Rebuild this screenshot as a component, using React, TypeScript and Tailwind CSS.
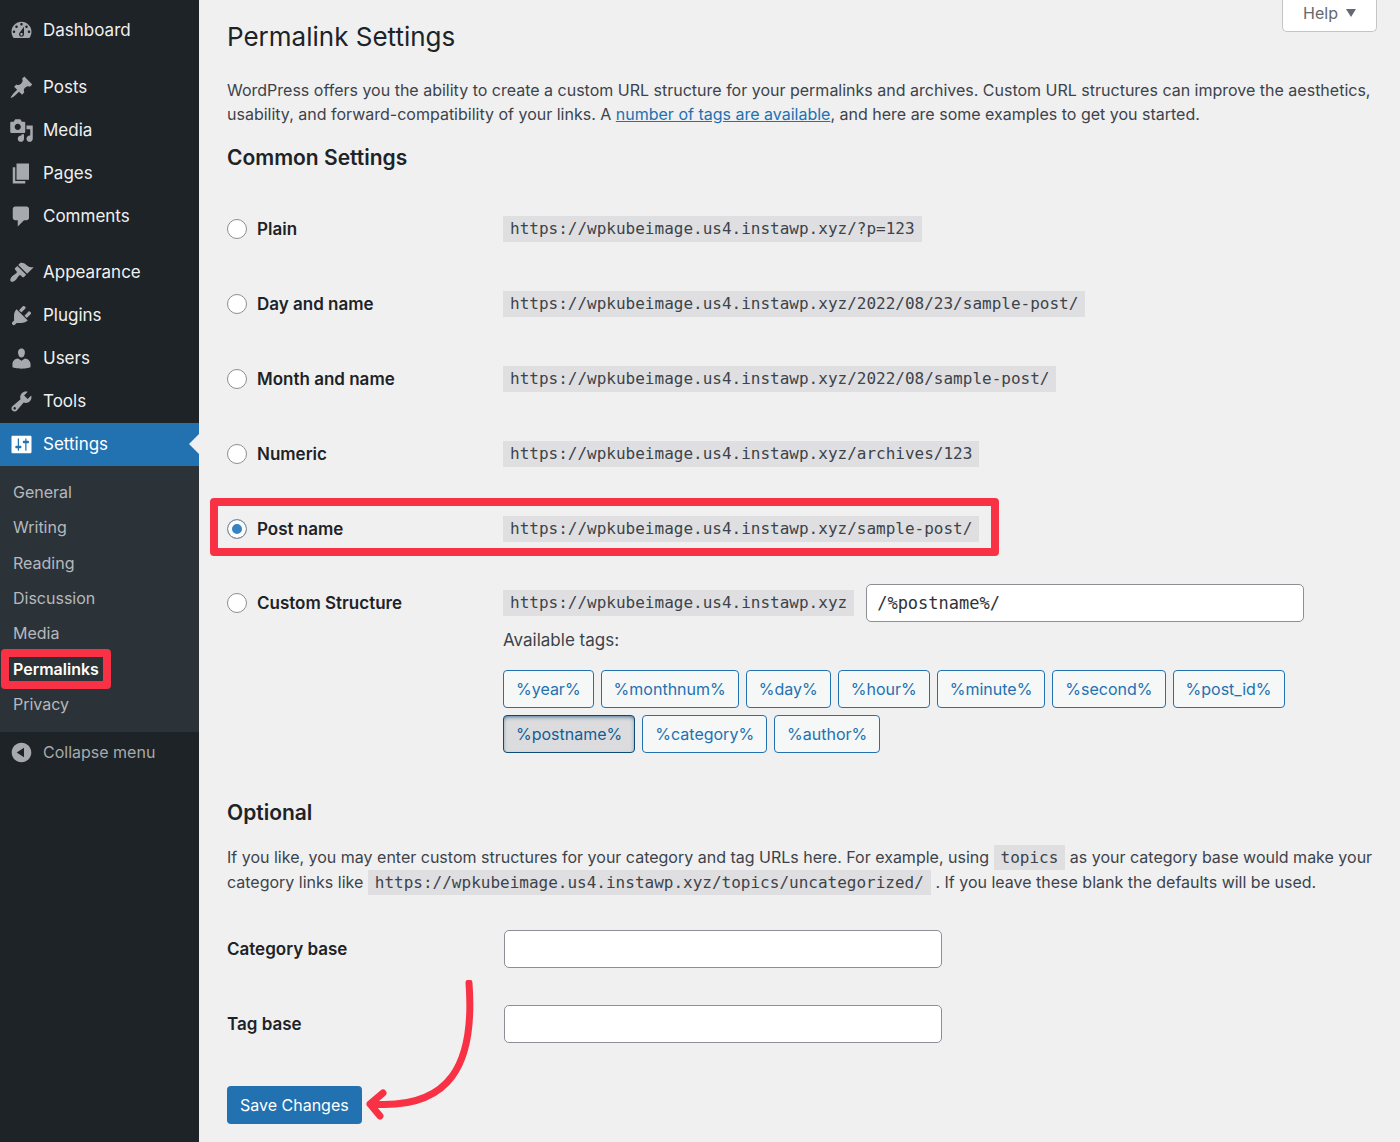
import React, { useState } from 'react';

const SITE = 'https://wpkubeimage.us4.instawp.xyz';

// 20x20 menu glyphs
const ICONS: Record<string, string> = {
  dashboard:
    'M3.76 16h12.48c1.1-1.37 1.76-3.11 1.76-5 0-4.42-3.58-8-8-8s-8 3.58-8 8c0 1.89.66 3.63 1.76 5zM10 4c.55 0 1 .45 1 1s-.45 1-1 1-1-.45-1-1 .45-1 1-1zM6 6c.55 0 1 .45 1 1s-.45 1-1 1-1-.45-1-1 .45-1 1-1zm8 0c.55 0 1 .45 1 1s-.45 1-1 1-1-.45-1-1 .45-1 1-1zm-5.37 5.55L12 7v6c0 1.1-.9 2-2 2s-2-.9-2-2c0-.57.24-1.08.63-1.45zM4 10c.55 0 1 .45 1 1s-.45 1-1 1-1-.45-1-1 .45-1 1-1zm12 0c.55 0 1 .45 1 1s-.45 1-1 1-1-.45-1-1 .45-1 1-1zm-5 3c0-.55-.45-1-1-1s-1 .45-1 1 .45 1 1 1 1-.45 1-1z',
  posts:
    'M10.44 3.02l1.82-1.82 6.36 6.35-1.83 1.82c-1.05-.68-2.48-.57-3.41.36l-.75.75c-.92.93-1.04 2.35-.35 3.41l-1.83 1.82-2.41-2.41-2.8 2.79c-.42.42-3.38 2.71-3.8 2.29s1.86-3.39 2.28-3.81l2.79-2.79L4.1 9.36l1.83-1.82c1.05.69 2.48.57 3.4-.36l.75-.75c.93-.92 1.05-2.35.36-3.41z',
  media:
    'M13 11V4c0-.55-.45-1-1-1h-1.67L9 1H5L3.67 3H2c-.55 0-1 .45-1 1v7c0 .55.45 1 1 1h10c.55 0 1-.45 1-1zM7 4.5c1.38 0 2.5 1.12 2.5 2.5S8.38 9.5 7 9.5 4.5 8.38 4.5 7 5.62 4.5 7 4.5zM14 6h5v10.5c0 1.38-1.12 2.5-2.5 2.5S14 17.88 14 16.5s1.12-2.5 2.5-2.5c.17 0 .34.02.5.05V9h-3V6zm-4 8.05V13h2v3.5c0 1.38-1.12 2.5-2.5 2.5S7 17.88 7 16.5 8.12 14 9.5 14c.17 0 .34.02.5.05z',
  pages: 'M6 15V2h10v13H6zm-1 1h8v2H3V5h2v11z',
  comments: 'M5 2h9c1.1 0 2 .9 2 2v7c0 1.1-.9 2-2 2h-2l-5 5v-5H5c-1.1 0-2-.9-2-2V4c0-1.1.9-2 2-2z',
  appearance:
    'M14.48 11.06L7.41 3.99l1.5-1.5c.5-.56 2.3-.47 3.51.32 1.21.8 1.43 1.28 2.91 2.1 1.18.64 2.45 1.26 4.45.85zm-.71.71L6.7 4.7 4.93 6.47c-.39.39-.39 1.02 0 1.41l1.06 1.06c.39.39.39 1.03 0 1.42-.6.6-1.43 1.11-2.21 1.69-.35.26-.7.53-1.01.84C1.43 14.23.4 16.08 1.4 17.07c.99 1 2.84-.03 4.18-1.36.31-.31.58-.66.85-1.02.57-.78 1.08-1.61 1.69-2.21.39-.39 1.02-.39 1.41 0l1.06 1.06c.39.39 1.02.39 1.41 0z',
  plugins:
    'M13.11 4.36L9.87 7.6 8 5.73l3.24-3.24c.35-.34 1.05-.2 1.56.32.52.51.66 1.21.31 1.55zm-8 1.77l.91-1.12 9.01 9.01-1.19.84c-.71.71-2.63 1.16-3.82 1.16H6.14L4.9 17.26c-.59.59-1.54.59-2.12 0-.59-.58-.59-1.53 0-2.12l1.24-1.24v-3.88c0-1.13.4-3.19 1.09-3.89zm7.26 3.97l3.24-3.24c.34-.35 1.04-.21 1.55.31.52.51.66 1.21.31 1.55l-3.24 3.25z',
  users:
    'M10 9.25c-2.27 0-2.73-3.44-2.73-3.44C7 4.02 7.82 2 9.97 2c2.16 0 2.98 2.02 2.71 3.81 0 0-.41 3.44-2.68 3.44zm0 2.57L12.72 10c2.39 0 4.52 2.33 4.52 4.53v2.49s-3.65 1.13-7.24 1.13c-3.65 0-7.24-1.13-7.24-1.13v-2.49c0-2.25 1.94-4.48 4.47-4.48z',
  tools:
    'M16.68 9.77c-1.34 1.34-3.3 1.67-4.95.99l-5.41 6.52c-.99.99-2.59.99-3.58 0s-.99-2.59 0-3.57l6.52-5.42c-.68-1.65-.35-3.61.99-4.95 1.28-1.28 3.12-1.62 4.72-1.06l-2.89 2.89 2.82 2.82 2.86-2.87c.53 1.58.18 3.39-1.08 4.65zM3.81 16.21c.4.39 1.04.39 1.43 0 .4-.4.4-1.04 0-1.43-.39-.4-1.03-.4-1.43 0-.39.39-.39 1.03 0 1.43z',
  settings:
    'M18 16V4c0-.55-.45-1-1-1H3c-.55 0-1 .45-1 1v12c0 .55.45 1 1 1h14c.55 0 1-.45 1-1zM8 11h1c.55 0 1 .45 1 1s-.45 1-1 1H8v1.5c0 .28-.22.5-.5.5s-.5-.22-.5-.5V13H6c-.55 0-1-.45-1-1s.45-1 1-1h1V5.5c0-.28.22-.5.5-.5s.5.22.5.5V11zm5-2h-1c-.55 0-1-.45-1-1s.45-1 1-1h1V5.5c0-.28.22-.5.5-.5s.5.22.5.5V7h1c.55 0 1 .45 1 1s-.45 1-1 1h-1v5.5c0 .28-.22.5-.5.5s-.5-.22-.5-.5V9z',
  collapse:
    'M10 2.16c4.33 0 7.84 3.51 7.84 7.84s-3.51 7.84-7.84 7.84S2.16 14.33 2.16 10 5.71 2.16 10 2.16zm2 11.72V6.12L6.18 9.97z',
};

const menuGroups = [
  [{ label: 'Dashboard', icon: 'dashboard' }],
  [
    { label: 'Posts', icon: 'posts' },
    { label: 'Media', icon: 'media' },
    { label: 'Pages', icon: 'pages' },
    { label: 'Comments', icon: 'comments' },
  ],
  [
    { label: 'Appearance', icon: 'appearance' },
    { label: 'Plugins', icon: 'plugins' },
    { label: 'Users', icon: 'users' },
    { label: 'Tools', icon: 'tools' },
    { label: 'Settings', icon: 'settings' },
  ],
];

const submenu = ['General', 'Writing', 'Reading', 'Discussion', 'Media', 'Permalinks', 'Privacy'];

const structures = [
  { id: 'plain', label: 'Plain', example: '/?p=123' },
  { id: 'day', label: 'Day and name', example: '/2022/08/23/sample-post/' },
  { id: 'month', label: 'Month and name', example: '/2022/08/sample-post/' },
  { id: 'numeric', label: 'Numeric', example: '/archives/123' },
  { id: 'postname', label: 'Post name', example: '/sample-post/' },
];

const tags = ['year', 'monthnum', 'day', 'hour', 'minute', 'second', 'post_id', 'postname', 'category', 'author'];

function MenuIcon({ name }: { name: string }) {
  return (
    <svg viewBox="0 0 20 20" className="h-[25px] w-[25px] shrink-0" fill="currentColor" fillRule="evenodd" aria-hidden="true">
      <path d={ICONS[name]} />
    </svg>
  );
}

function Code({ children }: { children: React.ReactNode }) {
  return (
    <code className="bg-[#dfdfe1] px-[7px] py-[3px] font-['DejaVu_Sans_Mono',monospace] text-base leading-5 text-[#3c434a]">
      {children}
    </code>
  );
}

function Highlight({ className }: { className: string }) {
  return <span className={`pointer-events-none absolute rounded border-8 border-[#f83244] ${className}`} />;
}

function Sidebar() {
  return (
    <nav className="w-[199px] shrink-0 bg-[#1d2327] pt-[9px] text-[17px] text-[#f0f0f1]">
      {menuGroups.map((group, i) => (
        <ul key={i} className={i === 0 ? 'mb-[14px]' : i === 1 ? 'mb-[13px]' : ''}>
          {group.map((item) => {
            const current = item.label === 'Settings';
            return (
              <li key={item.label} className="relative">
                <a
                  href="#"
                  className={`flex h-[43px] items-center gap-[9px] pl-[9px] ${current ? 'bg-[#2271b1] text-white' : ''}`}
                >
                  <span className={`flex ${current ? 'text-white' : 'text-[#a7aaad]'}`}>
                    <MenuIcon name={item.icon} />
                  </span>
                  {item.label}
                </a>
                {current && (
                  <span className="absolute top-[11px] right-0 border-y-10 border-r-10 border-y-transparent border-r-[#f0f0f1]" />
                )}
              </li>
            );
          })}
        </ul>
      ))}

      <ul className="flex h-[266px] flex-col bg-[#2c3338] pt-2 pb-[10px] text-base text-[#b5b9be]">
        {submenu.map((label) => (
          <li key={label} className="flex flex-1 items-center pl-[13px]">
            {label === 'Permalinks' ? (
              <a href="#" className="relative font-semibold text-white">
                {label}
                <Highlight className="-inset-x-3 -inset-y-2" />
              </a>
            ) : (
              <a href="#">{label}</a>
            )}
          </li>
        ))}
      </ul>

      <button type="button" className="flex h-10 w-full items-center gap-[9px] pl-[9px] text-base text-[#a7aaad]">
        <MenuIcon name="collapse" />
        Collapse menu
      </button>
    </nav>
  );
}

const radioClass =
  'h-5 w-5 shrink-0 appearance-none rounded-full border border-[#8c8f94] bg-white checked:bg-[#3582c4] checked:shadow-[inset_0_0_0_4px_#fff]';
const inputClass = 'h-[38px] w-[438px] max-w-full rounded-[5px] border border-[#8c8f94] bg-white px-[10px] text-[#2c3338]';
const labelClass = 'text-[17px] leading-6 font-semibold text-[#1d2327]';

export default function App() {
  const [selected, setSelected] = useState('postname');
  const [structure, setStructure] = useState('/%postname%/');

  const toggleTag = (tag: string) => {
    const part = `%${tag}%/`;
    setStructure(structure.includes(part) ? structure.replace(part, '') : structure + part);
    setSelected('custom');
  };

  return (
    <div className="flex min-h-screen bg-[#f0f0f1] font-['Inter',sans-serif] text-base text-[#3c434a]">
      <Sidebar />

      <main className="min-w-0 flex-1 pr-[23px] pb-[18px] pl-[28px]">
        <header className="flex items-start justify-between">
          <h1 className="mt-4 text-[26px] leading-[42px] text-[#1d2327]">Permalink Settings</h1>
          <button
            type="button"
            className="flex h-8 items-center gap-2 rounded-b-[5px] border border-t-0 border-[#c3c4c7] bg-white px-5 pb-[6px] text-[#646970]"
          >
            Help
            <svg viewBox="0 0 10 8" className="h-2 w-[10px]" fill="currentColor" aria-hidden="true">
              <path d="M0 0h10L5 8z" />
            </svg>
          </button>
        </header>

        <p className="mt-5 leading-6">
          WordPress offers you the ability to create a custom URL structure for your permalinks and archives. Custom URL
          structures can improve the aesthetics, usability, and forward-compatibility of your links. A{' '}
          <a href="#" className="text-[#2271b1] underline">
            number of tags are available
          </a>
          , and here are some examples to get you started.
        </p>

        <form onSubmit={(e) => e.preventDefault()}>
          <h2 className="mt-[18px] mb-[19px] text-[21px] leading-7 font-semibold text-[#1d2327]">Common Settings</h2>

          {structures.map((s) => (
            <div key={s.id} className="flex h-[75px] items-center">
              <div className="relative flex items-center">
                <label className={`flex w-[276px] items-center gap-[10px] ${labelClass}`}>
                  <input
                    type="radio"
                    name="structure"
                    checked={selected === s.id}
                    onChange={() => setSelected(s.id)}
                    className={radioClass}
                  />
                  {s.label}
                </label>
                <Code>{SITE + s.example}</Code>
                {s.id === 'postname' && <Highlight className="-top-[18px] -right-5 -bottom-[14px] -left-[17px]" />}
              </div>
            </div>
          ))}

          <div className="flex pt-[18px]">
            <label className={`flex h-[38px] w-[276px] shrink-0 items-center gap-[10px] ${labelClass}`}>
              <input
                type="radio"
                name="structure"
                checked={selected === 'custom'}
                onChange={() => setSelected('custom')}
                className={radioClass}
              />
              Custom Structure
            </label>
            <div>
              <div className="flex items-center gap-3">
                <Code>{SITE}</Code>
                <input
                  type="text"
                  aria-label="Custom structure"
                  value={structure}
                  onChange={(e) => setStructure(e.target.value)}
                  className={`${inputClass} font-['DejaVu_Sans_Mono',monospace] text-[17px]`}
                />
              </div>
              <p className="mt-[6px] text-[17px] leading-6">Available tags:</p>
              <div className="mt-[18px] flex flex-wrap gap-[7px]">
                {tags.map((tag) => (
                  <button
                    key={tag}
                    type="button"
                    onClick={() => toggleTag(tag)}
                    className={`h-[38px] rounded border px-3 ${
                      structure.includes(`%${tag}%`)
                        ? 'border-[#0a4b78] bg-[#dcdcde] text-[#135e96] shadow-[inset_0_2px_5px_-2px_#0a4b78]'
                        : 'border-[#2271b1] bg-[#f6f7f7] text-[#2271b1]'
                    }`}
                  >
                    %{tag}%
                  </button>
                ))}
              </div>
            </div>
          </div>

          <h2 className="mt-[46px] text-[21px] leading-7 font-semibold text-[#1d2327]">Optional</h2>
          <p className="mt-[18px] leading-[25px]">
            If you like, you may enter custom structures for your category and tag URLs here. For example, using{' '}
            <Code>topics</Code> as your category base would make your category links like{' '}
            <Code>{SITE}/topics/uncategorized/</Code> . If you leave these blank the defaults will be used.
          </p>

          <div className="mt-[35px] flex flex-col gap-[37px]">
            <div className="flex items-center">
              <label htmlFor="category-base" className={`w-[277px] shrink-0 ${labelClass}`}>
                Category base
              </label>
              <input id="category-base" type="text" className={inputClass} />
            </div>
            <div className="flex items-center">
              <label htmlFor="tag-base" className={`w-[277px] shrink-0 ${labelClass}`}>
                Tag base
              </label>
              <input id="tag-base" type="text" className={inputClass} />
            </div>
          </div>

          <div className="relative mt-[43px] inline-block">
            <button type="submit" className="h-[38px] rounded bg-[#2271b1] px-[13px] text-white">
              Save Changes
            </button>
            <svg
              viewBox="0 0 112 144"
              className="pointer-events-none absolute bottom-0 left-full h-[144px] w-[112px]"
              fill="none"
              stroke="#f83244"
              strokeWidth="7"
              strokeLinecap="round"
              strokeLinejoin="round"
              aria-hidden="true"
            >
              <path d="M107 3C113 84 89 130 9 124M21 113L8 124L18 136" />
            </svg>
          </div>
        </form>
      </main>
    </div>
  );
}
